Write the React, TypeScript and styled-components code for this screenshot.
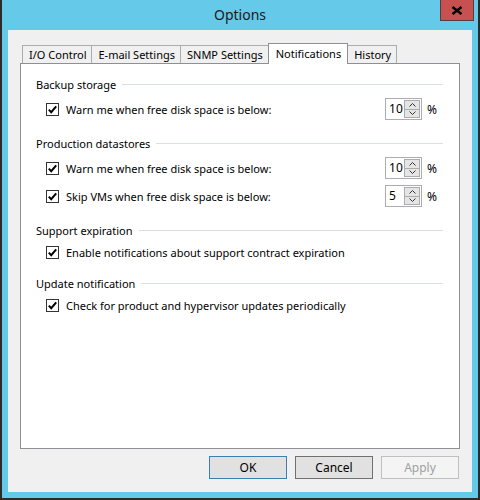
import React from "react";
import styled, { createGlobalStyle } from "styled-components";

const GlobalStyle = createGlobalStyle`
    html, body {
        margin: 0;
        padding: 0;
        background: #ffffff;
    }
    body {
        font-family: "Noto Sans", "Open Sans", sans-serif;
        font-size: 11px;
        color: #000000;
    }
`;

const frameBlue = "#65c9e9";
const borderGrey = "#8e9096";
const tabGrey = "#acacac";

const Window = styled.div`
    width: 480px;
    height: 500px;
    box-sizing: border-box;
    background: ${frameBlue};
    border: 2px solid #2b2b2b;
    border-top: none;
    padding: 0 6px 6px;
    display: flex;
    flex-direction: column;
`;

const TitleBar = styled.div`
    height: 30px;
    margin: 0 -6px;
    display: grid;
    grid-template-columns: 1fr auto 1fr;
    align-items: center;
`;

const Title = styled.div`
    grid-column: 2;
    font-size: 14px;
    color: #1a1a1a;
    padding-bottom: 1px;
`;

const CloseButton = styled.div`
    grid-column: 3;
    justify-self: end;
    align-self: start;
    margin-right: 4px;
    width: 34px;
    height: 21px;
    box-sizing: border-box;
    background: #c75050;
    border: 1px solid #5a3a3a;
    border-top: none;
    display: flex;
    align-items: center;
    justify-content: center;
`;

const Content = styled.div`
    flex: 1;
    background: #f0f0f0;
    padding: 13px 12px 13px 12px;
    display: flex;
    flex-direction: column;
`;

const TabStrip = styled.div`
    display: flex;
    align-items: flex-end;
    height: 20px;
    padding-left: 2px;
    position: relative;
    z-index: 1;
`;

const Tab = styled.div<{ $active?: boolean }>`
    height: ${p => (p.$active ? 21 : 18)}px;
    margin-bottom: ${p => (p.$active ? -1 : 0)}px;
    margin-left: -1px;
    &:first-child {
        margin-left: 0;
    }
    box-sizing: border-box;
    padding: ${p => (p.$active ? "0 6px 1px 7px" : "0 5px 0 6px")};
    background: ${p => (p.$active ? "#ffffff" : "#f0f0f0")};
    border: 1px solid ${p => (p.$active ? borderGrey : tabGrey)};
    border-bottom: none;
    display: flex;
    align-items: center;
    white-space: nowrap;
    position: relative;
    z-index: ${p => (p.$active ? 2 : 1)};
`;

const Panel = styled.div`
    flex: 1;
    background: #ffffff;
    border: 1px solid ${borderGrey};
    padding: 12px 16px 0 15px;
    display: flex;
    flex-direction: column;
`;

const Section = styled.div`
    display: flex;
    flex-direction: column;
    gap: 6px;
    & + & {
        margin-top: 15px;
    }
`;

const SectionHeader = styled.div`
    height: 16px;
    display: flex;
    align-items: center;
    gap: 6px;
    white-space: nowrap;
`;

const HeaderRule = styled.div`
    flex: 1;
    height: 1px;
    background: #dadfe5;
`;

const Row = styled.div<{ $tall?: boolean }>`
    height: ${p => (p.$tall ? 22 : 16)}px;
    margin-left: 10px;
    display: flex;
    align-items: center;
`;

const Box = styled.div`
    width: 13px;
    height: 13px;
    box-sizing: border-box;
    border: 1px solid #333333;
    background: #ffffff;
    display: flex;
    align-items: center;
    justify-content: center;
    margin-right: 7px;
    flex-shrink: 0;
`;

const Label = styled.span`
    white-space: nowrap;
`;

const SpinGroup = styled.div`
    margin-left: auto;
    margin-right: 6px;
    display: flex;
    align-items: center;
    gap: 5px;
`;

const Spinner = styled.div`
    width: 37px;
    height: 22px;
    box-sizing: border-box;
    border: 1px solid #abadb3;
    background: #ffffff;
    display: flex;
`;

const SpinValue = styled.div`
    flex: 1;
    padding-left: 3px;
    line-height: 20px;
    font-size: 12px;
`;

const SpinButtons = styled.div`
    width: 16px;
    padding: 1px 1px 1px 0;
    display: flex;
    flex-direction: column;
`;

const SpinButton = styled.div`
    flex: 1;
    box-sizing: border-box;
    background: #e5e5e5;
    border: 1px solid #acacac;
    display: flex;
    align-items: center;
    justify-content: center;
    & + & {
        border-top: none;
    }
`;

const Percent = styled.span`
    font-size: 12px;
`;

const ButtonRow = styled.div`
    margin-top: 7px;
    margin-right: 1px;
    display: flex;
    justify-content: flex-end;
    gap: 8px;
`;

const DialogButton = styled.div<{ $variant?: "default" | "normal" | "disabled" }>`
    width: 78px;
    height: 23px;
    box-sizing: border-box;
    display: flex;
    align-items: center;
    justify-content: center;
    font-size: 12px;
    background: ${p => (p.$variant === "disabled" ? "#f4f4f4" : "#e1e1e1")};
    border: 1px solid
        ${p =>
            p.$variant === "default"
                ? "#3c7fb1"
                : p.$variant === "disabled"
                  ? "#bfbfbf"
                  : "#707070"};
    color: ${p => (p.$variant === "disabled" ? "#a0a0a0" : "#000000")};
`;

function Check() {
    return (
        <Box>
            <svg width="11" height="11" viewBox="0 0 11 11">
                <path
                    d="M1.8 5.6 L4.2 8.2 L9.2 2.4"
                    fill="none"
                    stroke="#000"
                    strokeWidth="2"
                />
            </svg>
        </Box>
    );
}

function Chevron({ up }: { up?: boolean }) {
    return (
        <svg width="7" height="4" viewBox="0 0 7 4">
            <path
                d={up ? "M0.5 3.5 L3.5 0.5 L6.5 3.5" : "M0.5 0.5 L3.5 3.5 L6.5 0.5"}
                fill="none"
                stroke="#333"
                strokeWidth="1"
            />
        </svg>
    );
}

function NumberBox({ value }: { value: number }) {
    return (
        <SpinGroup>
            <Spinner>
                <SpinValue>{value}</SpinValue>
                <SpinButtons>
                    <SpinButton>
                        <Chevron up />
                    </SpinButton>
                    <SpinButton>
                        <Chevron />
                    </SpinButton>
                </SpinButtons>
            </Spinner>
            <Percent>%</Percent>
        </SpinGroup>
    );
}

const tabs = [
    "I/O Control",
    "E-mail Settings",
    "SNMP Settings",
    "Notifications",
    "History",
];

export default function App() {
    return (
        <>
            <GlobalStyle />
            <Window>
                <TitleBar>
                    <Title>Options</Title>
                    <CloseButton>
                        <svg width="12" height="9" viewBox="0 0 12 9">
                            <path
                                d="M1.5 1 L10.5 8 M10.5 1 L1.5 8"
                                stroke="#000"
                                strokeWidth="2.4"
                            />
                        </svg>
                    </CloseButton>
                </TitleBar>
                <Content>
                    <TabStrip>
                        {tabs.map(t => (
                            <Tab key={t} $active={t === "Notifications"}>
                                {t}
                            </Tab>
                        ))}
                    </TabStrip>
                    <Panel>
                        <Section>
                            <SectionHeader>
                                Backup storage
                                <HeaderRule />
                            </SectionHeader>
                            <Row $tall>
                                <Check />
                                <Label>Warn me when free disk space is below:</Label>
                                <NumberBox value={10} />
                            </Row>
                        </Section>
                        <Section>
                            <SectionHeader>
                                Production datastores
                                <HeaderRule />
                            </SectionHeader>
                            <Row $tall>
                                <Check />
                                <Label>Warn me when free disk space is below:</Label>
                                <NumberBox value={10} />
                            </Row>
                            <Row $tall>
                                <Check />
                                <Label>Skip VMs when free disk space is below:</Label>
                                <NumberBox value={5} />
                            </Row>
                        </Section>
                        <Section>
                            <SectionHeader>
                                Support expiration
                                <HeaderRule />
                            </SectionHeader>
                            <Row>
                                <Check />
                                <Label>
                                    Enable notifications about support contract expiration
                                </Label>
                            </Row>
                        </Section>
                        <Section>
                            <SectionHeader>
                                Update notification
                                <HeaderRule />
                            </SectionHeader>
                            <Row>
                                <Check />
                                <Label>
                                    Check for product and hypervisor updates periodically
                                </Label>
                            </Row>
                        </Section>
                    </Panel>
                    <ButtonRow>
                        <DialogButton $variant="default">OK</DialogButton>
                        <DialogButton $variant="normal">Cancel</DialogButton>
                        <DialogButton $variant="disabled">Apply</DialogButton>
                    </ButtonRow>
                </Content>
            </Window>
        </>
    );
}
